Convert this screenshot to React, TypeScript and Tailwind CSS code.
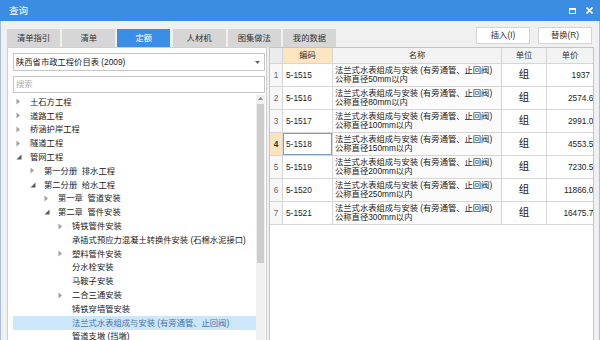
import React from "react";

const FONT = '"Liberation Sans","Noto Sans CJK SC",sans-serif';

type Node = { label: string; level: number; arrow?: "closed" | "open"; selected?: boolean };

const tree: Node[] = [
  { label: "土石方工程", level: 0, arrow: "closed" },
  { label: "道路工程", level: 0, arrow: "closed" },
  { label: "桥涵护岸工程", level: 0, arrow: "closed" },
  { label: "隧道工程", level: 0, arrow: "closed" },
  { label: "管网工程", level: 0, arrow: "open" },
  { label: "第一分册  排水工程", level: 1, arrow: "closed" },
  { label: "第二分册  给水工程", level: 1, arrow: "open" },
  { label: "第一章  管道安装", level: 2, arrow: "closed" },
  { label: "第二章  管件安装", level: 2, arrow: "open" },
  { label: "铸铁管件安装", level: 3, arrow: "closed" },
  { label: "承插式预应力混凝土转换件安装 (石棉水泥接口)", level: 3 },
  { label: "塑料管件安装", level: 3, arrow: "closed" },
  { label: "分水栓安装", level: 3 },
  { label: "马鞍子安装", level: 3 },
  { label: "二合三通安装", level: 3, arrow: "closed" },
  { label: "铸铁穿墙管安装", level: 3 },
  { label: "法兰式水表组成与安装 (有旁通管、止回阀)", level: 3, selected: true },
  { label: "管道支墩 (挡墩)", level: 3 },
];

const indent = ["pl-[0px]", "pl-[14px]", "pl-[28px]", "pl-[42px]"];

const rows = [
  { n: 1, code: "5-1515", d: "50", price: "1937", full: true },
  { n: 2, code: "5-1516", d: "80", price: "2574.61" },
  { n: 3, code: "5-1517", d: "100", price: "2991.02" },
  { n: 4, code: "5-1518", d: "150", price: "4553.59", sel: true },
  { n: 5, code: "5-1519", d: "200", price: "7230.53" },
  { n: 6, code: "5-1520", d: "250", price: "11866.04" },
  { n: 7, code: "5-1521", d: "300", price: "16475.71" },
];

const tabs = ["清单指引", "清单", "定额", "人材机", "图集做法", "我的数据"];

function Arrow({ kind }: { kind?: "closed" | "open" }) {
  if (kind === "closed")
    return (
      <svg width="5" height="7" viewBox="0 0 5 7" className="ml-[3px]">
        <path d="M0.5 0.5 L4 3.5 L0.5 6.5 Z" fill="#a0a0a0" />
      </svg>
    );
  if (kind === "open")
    return (
      <svg width="6" height="6" viewBox="0 0 6 6" className="ml-[3px]">
        <path d="M5.5 0.5 L5.5 5.5 L0.5 5.5 Z" fill="#5a5a5a" />
      </svg>
    );
  return null;
}

export default function App() {
  return (
    <div
      className="w-[600px] h-[340px] overflow-hidden flex flex-col bg-[#f0f0f0] text-[#222]"
      style={{ fontFamily: FONT }}
    >
      {/* title bar */}
      <div className="h-[21px] shrink-0 bg-[#3b8de3] flex items-center justify-between pl-[9px] pr-[7px]">
        <span className="text-white text-[9.5px] leading-none">查询</span>
        <div className="flex items-center gap-[10px]">
          <div className="w-[7px] h-[6px] border-[1.5px] border-t-[2.5px] border-white" />
          <svg width="7" height="7" viewBox="0 0 7 7">
            <path d="M0.5 0.5 L6.5 6.5 M6.5 0.5 L0.5 6.5" stroke="white" strokeWidth="1.6" />
          </svg>
        </div>
      </div>

      <div className="flex-1 flex flex-col border-x border-[#a9c0da] min-h-0">
        {/* tabs + buttons */}
        <div className="h-[26px] shrink-0 flex justify-between pl-[6px] pr-[7px]">
          <div className="flex items-end gap-[2.2px]">
            {tabs.map((t) => (
              <div
                key={t}
                className={
                  t === "定额"
                    ? "w-[53px] h-[18px] flex items-center justify-center text-[8.3px] bg-[#3a8ee6] text-white"
                    : "w-[53px] h-[18px] flex items-center justify-center text-[8.3px] bg-[#d6d6d6] text-[#333]"
                }
              >
                {t}
              </div>
            ))}
          </div>
          <div className="flex gap-[8px] pt-[6px]">
            <div className="w-[54px] h-[17px] bg-white border border-[#d4d4d4] flex items-center justify-center text-[8.3px] text-[#333]">
              插入(I)
            </div>
            <div className="w-[54px] h-[17px] bg-white border border-[#d4d4d4] flex items-center justify-center text-[8.3px] text-[#333]">
              替换(R)
            </div>
          </div>
        </div>

        {/* main */}
        <div className="flex-1 flex pl-[6px] min-h-0 overflow-hidden">
          {/* left panel */}
          <div className="w-[260px] h-[300px] shrink-0 bg-white border border-[#cfcfcf] flex flex-col pt-[5px] pl-[5px] pr-[1px]">
            <div className="h-[18px] border border-[#c6c6c6] flex items-center justify-between pl-[2px] pr-[4px]">
              <span className="text-[8.3px]">陕西省市政工程价目表 (2009)</span>
              <svg width="5" height="3" viewBox="0 0 5 3">
                <path d="M0 0 L5 0 L2.5 3 Z" fill="#666" />
              </svg>
            </div>
            <div className="mt-[5px] h-[17px] border border-[#c6c6c6] flex items-center pl-[2px]">
              <span className="text-[8.3px] text-[#b0b0b0]">搜索</span>
            </div>
            <div className="mt-[2px] flex flex-1 min-h-0">
              <div className="flex-1 flex flex-col">
                {tree.map((n) => (
                  <div
                    key={n.label}
                    className={
                      (n.selected ? "bg-[#cce6fa] text-[#4a74a8] " : "") +
                      "h-[13.8px] shrink-0 flex items-center " +
                      indent[n.level]
                    }
                  >
                    <div className="w-[17px] shrink-0 flex items-center">
                      <Arrow kind={n.arrow} />
                    </div>
                    <span className="text-[8.3px] whitespace-pre leading-none">{n.label}</span>
                  </div>
                ))}
              </div>
              <div className="w-[9px] shrink-0 bg-[#f0f0f0] flex flex-col items-center">
                <svg width="5" height="3" viewBox="0 0 5 3" className="mt-[2px]">
                  <path d="M0 3 L5 3 L2.5 0 Z" fill="#8a8a8a" />
                </svg>
                <div className="mt-[4px] w-[7px] h-[159px] bg-[#cdcdcd]" />
              </div>
            </div>
          </div>

          {/* table */}
          <div className="ml-[2px] w-[325px] h-[300px] shrink-0 bg-white border border-[#c4c4c4] flex flex-col">
            <div className="h-[16px] flex text-[8.3px] text-[#333]">
              <div className="w-[13px] border-r border-b border-[#d6d6d6] bg-[#ececec]" />
              <div className="w-[50px] border-r border-b border-[#d6d6d6] bg-[#fde5c2] flex items-center justify-center">
                编码
              </div>
              <div className="w-[169px] border-r border-b border-[#d6d6d6] bg-[#f3f3f3] flex items-center justify-center">
                名称
              </div>
              <div className="w-[45px] border-r border-b border-[#d6d6d6] bg-[#f3f3f3] flex items-center justify-center">
                单位
              </div>
              <div className="w-[46px] border-b border-[#d6d6d6] bg-[#f3f3f3] flex items-center justify-center">
                单价
              </div>
            </div>
            {rows.map((r) => (
              <div key={r.n} className="h-[23px] flex text-[8.3px]">
                <div
                  className={
                    r.sel
                      ? "w-[13px] border-r border-b border-[#d6d6d6] bg-[#fbe3bd] flex items-center justify-center text-[#333] font-bold"
                      : "w-[13px] border-r border-b border-[#d6d6d6] bg-[#f7f7f7] flex items-center justify-center text-[#666]"
                  }
                >
                  {r.n}
                </div>
                <div
                  className={
                    r.sel
                      ? "w-[50px] border-r border-b border-[#d6d6d6] flex items-center pl-[3px] shadow-[inset_0_0_0_1px_#7b9cc4]"
                      : "w-[50px] border-r border-b border-[#d6d6d6] flex items-center pl-[3px]"
                  }
                >
                  {r.code}
                </div>
                <div className="w-[169px] border-r border-b border-[#d6d6d6] flex flex-col justify-center pl-[2px] leading-[9.5px] bg-[#fbfbfb]">
                  <span className="whitespace-nowrap">法兰式水表组成与安装 (有旁通管、止回阀)</span>
                  <span className="whitespace-nowrap">公称直径{r.d}mm以内</span>
                </div>
                <div className="w-[45px] border-r border-b border-[#d6d6d6] flex items-center justify-center text-[10.5px]">
                  组
                </div>
                <div className="w-[46px] border-b border-[#d6d6d6] flex items-center justify-end overflow-hidden">
                  <span className={r.full ? "mr-[3px] whitespace-nowrap" : "mr-[-5px] whitespace-nowrap"}>
                    {r.price}
                  </span>
                </div>
              </div>
            ))}
          </div>
        </div>
      </div>
    </div>
  );
}
